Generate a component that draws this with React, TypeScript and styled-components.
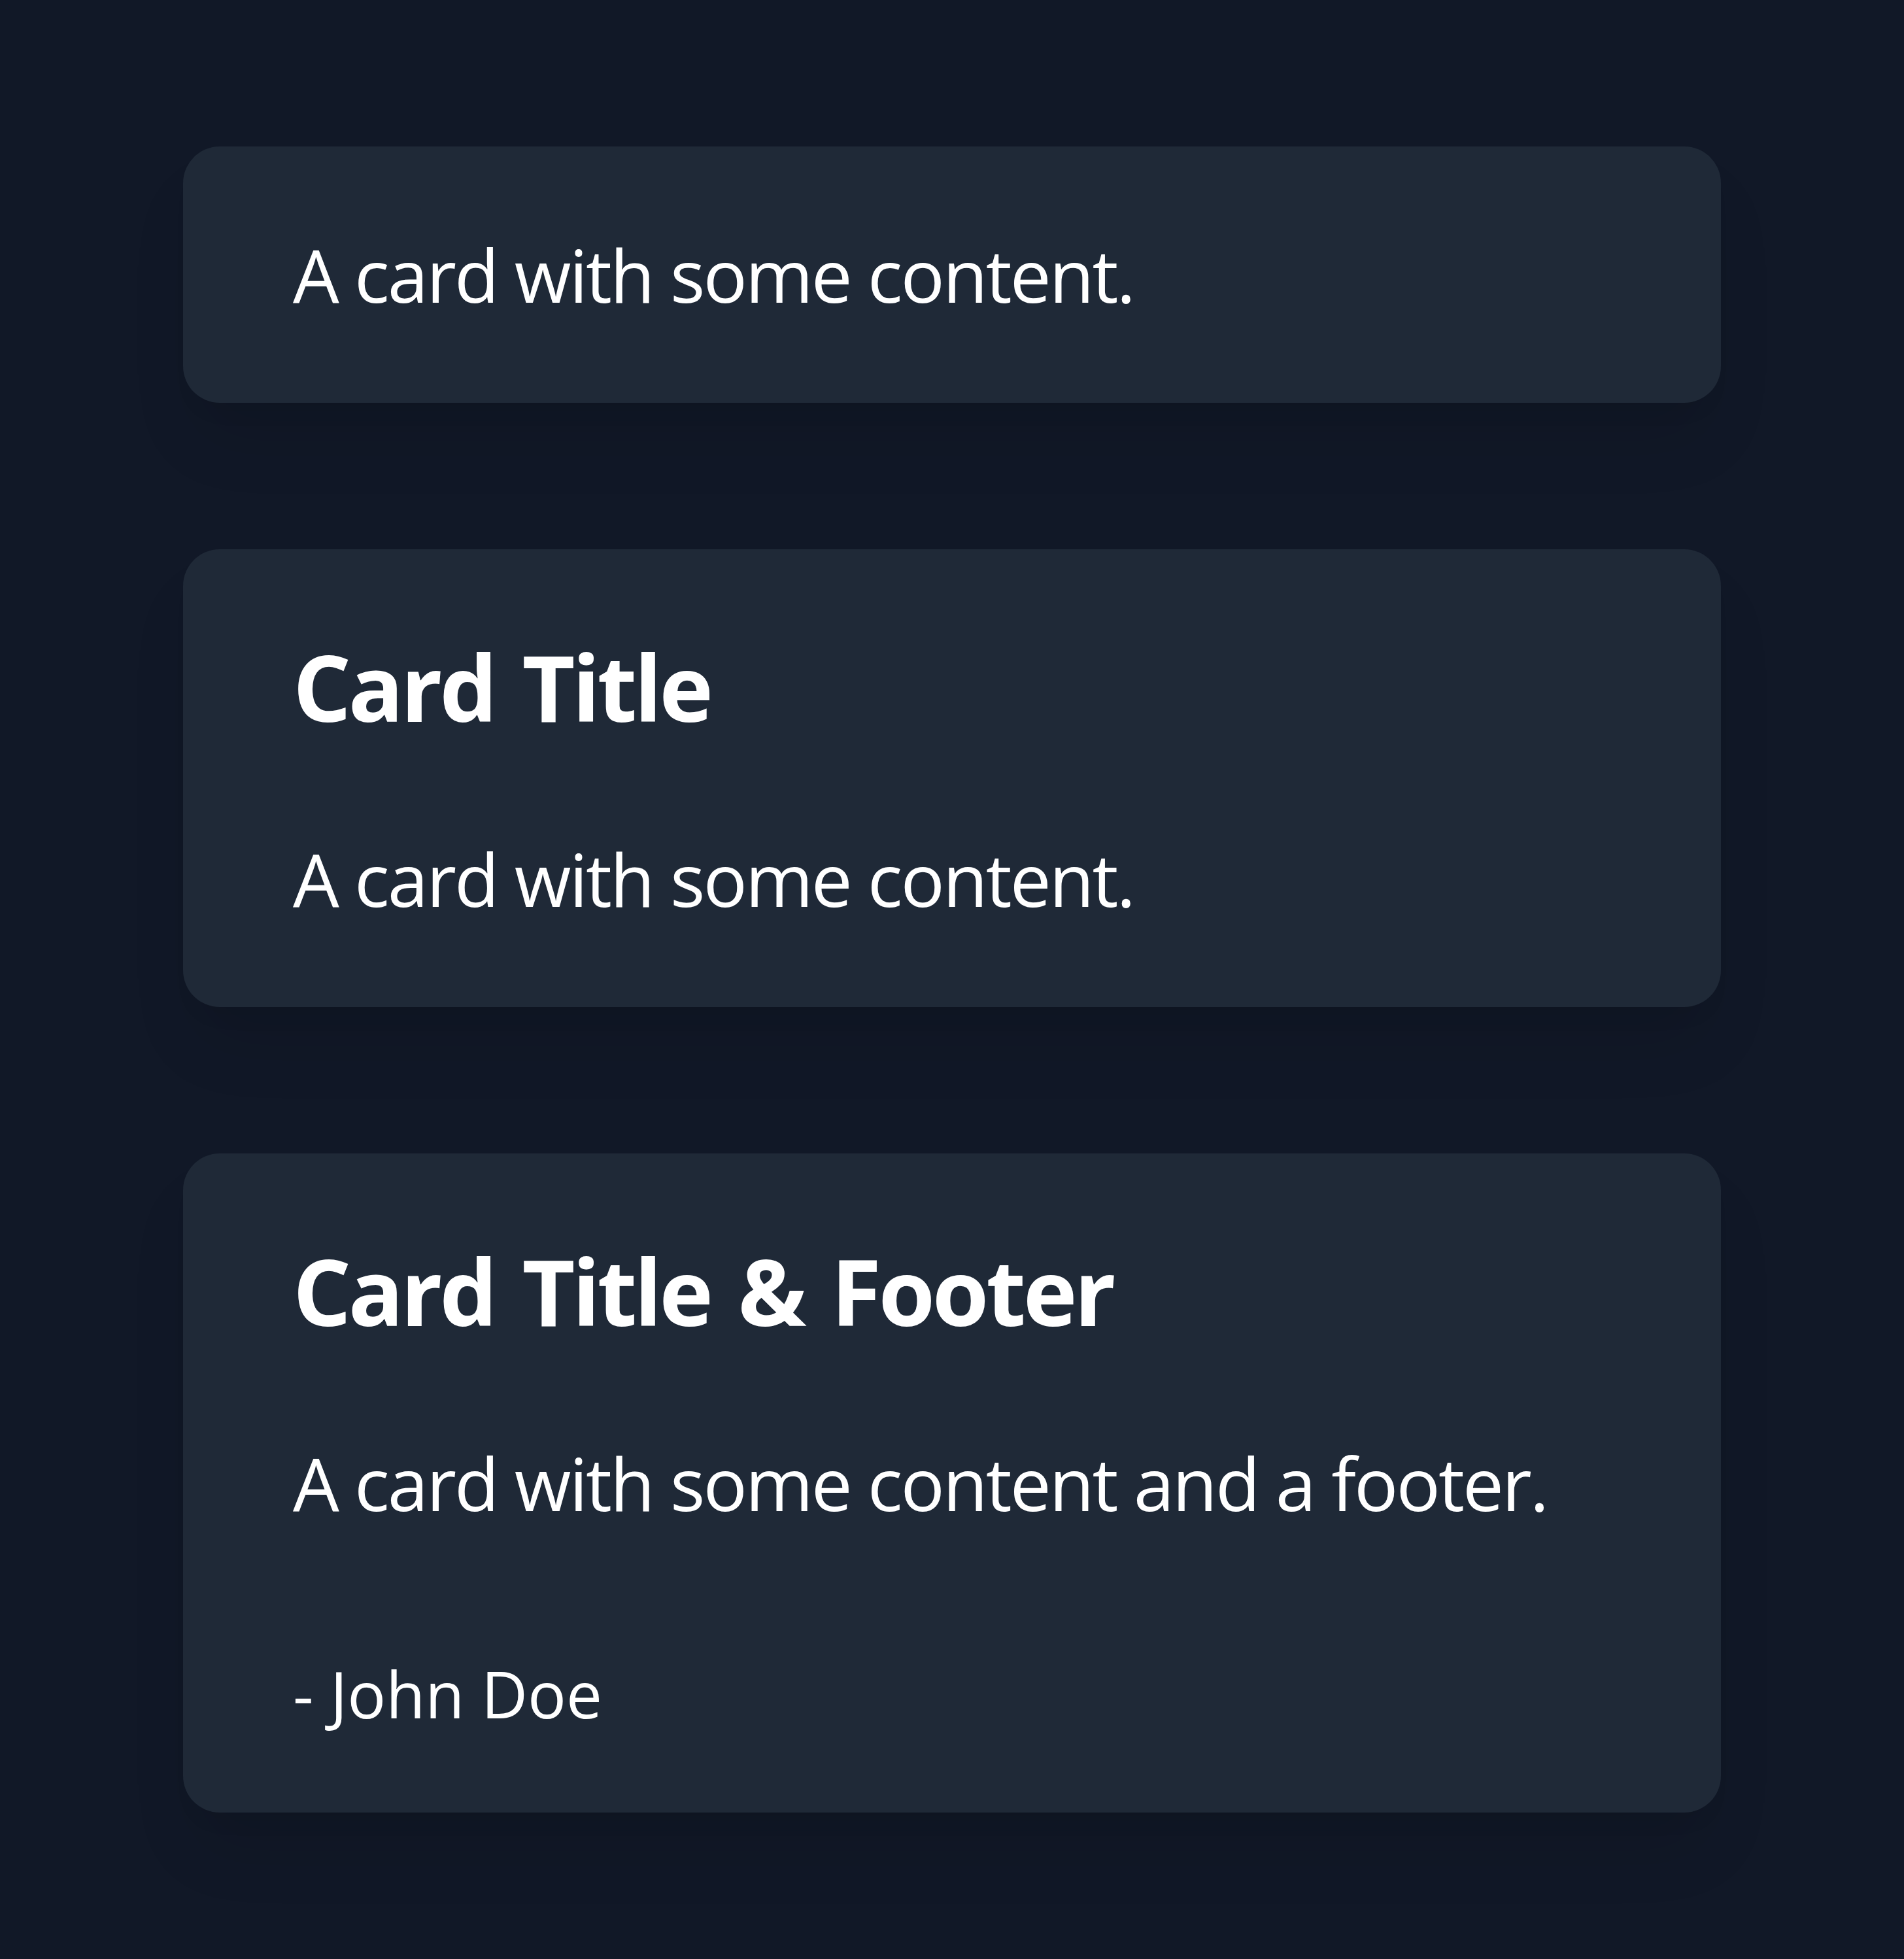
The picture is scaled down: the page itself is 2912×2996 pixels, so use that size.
import React from 'react'
import styled, { createGlobalStyle } from 'styled-components'

// Everything is laid out at 7x a 16px base (1rem = 112px).
const GlobalStyle = createGlobalStyle`
  html, body {
    margin: 0;
    padding: 0;
    background: #111827;
  }

  body {
    font-family: 'Open Sans', 'Noto Sans', sans-serif;
    color: #ffffff;
  }
`

const Page = styled.main`
  min-height: 2996px;
  box-sizing: border-box;
  padding: 224px 280px;

  display: flex;
  flex-direction: column;
  gap: 224px;
  background: #111827;
`

const CardSurface = styled.section`
  box-sizing: border-box;
  padding: 112px 168px;

  display: flex;
  flex-direction: column;

  border-radius: 56px;
  background: #1f2937;
  box-shadow: 0 70px 105px -21px rgba(0, 0, 0, 0.1), 0 28px 42px -28px rgba(0, 0, 0, 0.1);
`

const Title = styled.h2`
  margin: 0 0 112px;
  font-size: 140px;
  line-height: 196px;
  font-weight: 700;
  letter-spacing: -0.031em;
  word-spacing: 0.07em;
`

const Body = styled.p`
  margin: 0;
  font-size: 112px;
  line-height: 168px;
  font-weight: 400;
  letter-spacing: -0.026em;
  white-space: nowrap;
`

const Footer = styled.footer`
  margin-top: 168px;
  font-size: 98px;
  line-height: 140px;
`

interface CardProps {
  title?: string
  footer?: string
  children: React.ReactNode
}

function Card({ title, footer, children }: CardProps) {
  return (
    <CardSurface>
      {title ? <Title>{title}</Title> : null}
      <Body>{children}</Body>
      {footer ? <Footer>{footer}</Footer> : null}
    </CardSurface>
  )
}

export default function App() {
  return (
    <>
      <GlobalStyle />
      <Page>
        <Card>A card with some content.</Card>
        <Card title='Card Title'>A card with some content.</Card>
        <Card title='Card Title &amp; Footer' footer='- John Doe'>
          A card with some content and a footer.
        </Card>
      </Page>
    </>
  )
}
